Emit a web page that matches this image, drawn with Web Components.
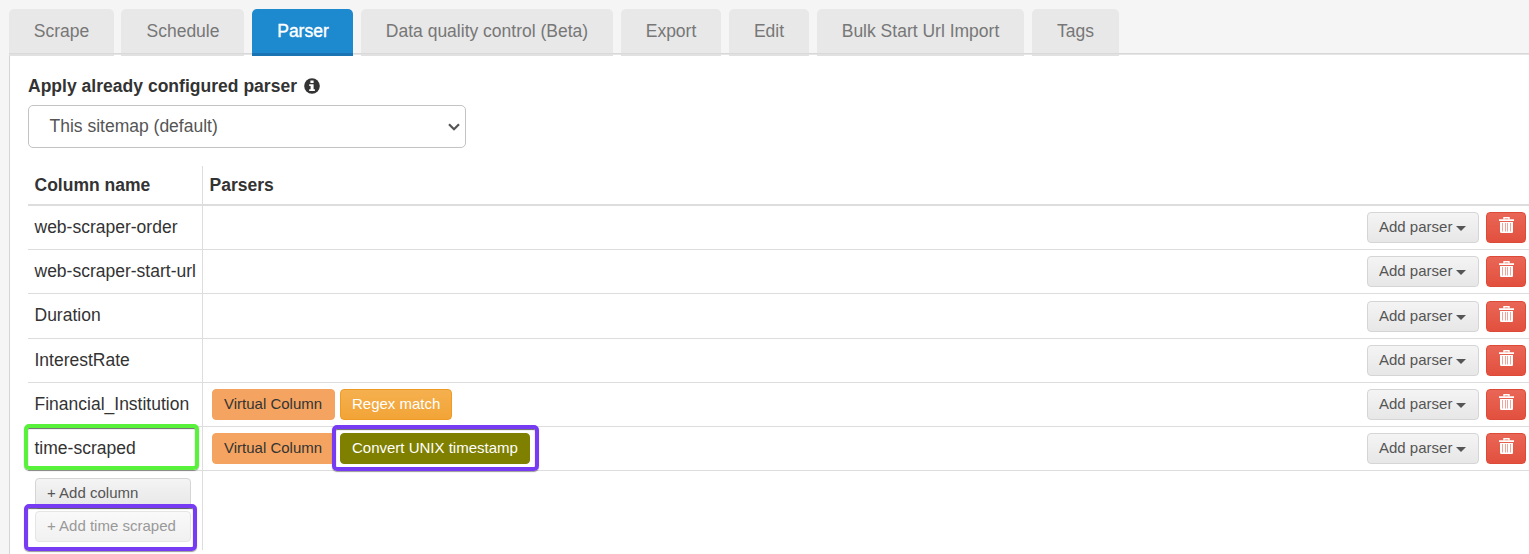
<!DOCTYPE html>
<html lang="en">
<head>
<meta charset="utf-8">
<title>Parser</title>
<style>
html,body{margin:0;height:100%;overflow:hidden;background:#f5f5f5}
body{font:17.5px/24px "Liberation Sans",Arial,sans-serif;color:#333}
</style>
</head>
<body>
<parser-page></parser-page>
<script>
function define(name, html) {
  const t = document.createElement('template');
  t.innerHTML = html;
  customElements.define(name, class extends HTMLElement {
    constructor() {
      super();
      this.attachShadow({ mode: 'open' }).appendChild(t.content.cloneNode(true));
    }
  });
}

define('nav-tab', `<style>
:host{display:block;box-sizing:border-box;width:var(--w);height:47px;padding:10px 0 0 var(--l,0);border-radius:5px 5px 0 0;
background:linear-gradient(#e8e8e8 44px,#d9d9d9 44px 45px,#e1e1e1 45px);color:#777;text-align:center;line-height:24px;white-space:nowrap}
:host([active]){background:linear-gradient(#1d89cf 44px,#1a74b3 44px);color:#fff;-webkit-text-stroke:.4px #fff}
</style><slot></slot>`);

define('tab-bar', `<style>
:host{display:flex;height:55px;box-sizing:border-box;padding:9px 0 0 9px;
background:linear-gradient(#d8d8d8,#d8d8d8) 9px 53px/100% 1px no-repeat,linear-gradient(#e5e5e5,#e5e5e5) 9px 54px/100% 1px no-repeat,#f5f5f5}
</style><slot></slot>`);

define('info-icon', `<style>:host{display:block;width:16px;height:16px}svg{display:block}</style>
<svg width="16" height="16" viewBox="0 0 16 16"><circle cx="8" cy="8" r="7.8" fill="#333"/>
<path fill="#fff" d="M6.4 2.4h3.2v2.5H6.4zM5.2 6.2h4.4v5h1.3V13H5.2v-1.8h1.4V8H5.2z"/></svg>`);

define('select-box', `<style>
:host{display:flex;align-items:center;justify-content:space-between;box-sizing:border-box;width:438px;height:43px;border:1px solid #c3c3c3;border-radius:5px;background:#fff;padding:0 5px 1px 20.5px;color:#555}
svg{display:block;margin-top:2px}
</style><span><slot></slot></span><svg width="12" height="8" viewBox="0 0 12 8"><path d="M1 1.2 6 6.2l5-5" fill="none" stroke="#555" stroke-width="2.2"/></svg>`);

define('ui-button', `<style>
:host{display:flex;align-items:center;box-sizing:border-box;width:var(--w);height:31px;padding:0 0 1px 11px;border:1px solid #d5d5d5;border-radius:4px;
background:linear-gradient(#f4f4f4,#e7e7e7);color:#555;font-size:15px;line-height:20px;white-space:nowrap}
:host([kind=virtual]){background:#f4a460;border-color:#f4a460;color:#333}
:host([kind=regex]){background:linear-gradient(#f5b04f,#f2a436);border-color:#ee9a24;color:#fff}
:host([kind=unix]){background:olive;border-color:olive;color:#fff}
:host([kind=danger]){background:linear-gradient(#e96656,#e2503e);border-color:#de4a38;padding:0;justify-content:center}
:host([disabled]){background:linear-gradient(#f9f9f9,#f1f1f1);border-color:#e5e5e5;color:#999}
</style><slot></slot>`);

define('caret-down', `<style>:host{display:block;margin:2px 0 0 4px;border:5px solid transparent;border-top-color:#555;border-bottom:0}</style>`);

define('trash-icon', `<style>:host{display:block;width:15px;height:16px;margin-top:-5px}svg{display:block}</style>
<svg width="15" height="16" viewBox="0 0 15 16">
<path d="M5 2.5V.8h5v1.7" fill="none" stroke="#fff" stroke-width="1.4"/>
<path fill="#fff" d="M0 2.3h15v1.8H0zM1 5h13v9.8q0 1.2-1.2 1.2H2.2Q1 16 1 14.8z"/>
<path d="M3.5 6v8.5M6.5 6v8.5M8.5 6v8.5M11.5 6v8.5" stroke="#f0a59b" stroke-width="1"/></svg>`);

define('row-actions', `<style>:host{display:flex;gap:7px}</style>
<ui-button style="--w:112px">Add parser<caret-down></caret-down></ui-button>
<ui-button kind="danger" style="--w:40px"><trash-icon></trash-icon></ui-button>`);

define('column-row', `<style>
:host{display:grid;grid-template-columns:174px 1fr auto;box-sizing:border-box;height:var(--h,44px);border-bottom:1px solid #ddd}
.name{box-sizing:border-box;padding:9px 0 0 6.5px;white-space:nowrap}
.parsers{display:flex;gap:5px;border-left:1px solid #ddd;padding:var(--t,6px) 0 0 9px}
row-actions{padding:var(--t,6px) 3px 0 0}
</style><div class="name"><slot name="name"></slot></div><div class="parsers"><slot></slot></div><row-actions></row-actions>`);

define('table-head', `<style>
:host{display:grid;grid-template-columns:174px 1fr;box-sizing:border-box;height:40px;border-bottom:2px solid #ddd;font-weight:700}
div{padding:7px 0 0 6.5px}.p{border-left:1px solid #ddd}
</style><div><slot name="name"></slot></div><div class="p"><slot></slot></div>`);

define('table-foot', `<style>
:host{display:grid;grid-template-columns:174px 1fr;height:79px}
.adds{display:grid;align-content:start;gap:2px;padding:7px 0 0 7px}.p{border-left:1px solid #ddd}
</style><div class="adds"><slot></slot></div><div class="p"></div>`);

define('mark-box', `<style>
:host{position:absolute;box-sizing:border-box;border:4px solid var(--c);border-radius:5px;box-shadow:inset 0 1px 1px #0009,0 1px 1px #0006}
</style>`);

define('parser-page', `<style>
:host{display:block;height:554px;position:relative;overflow:hidden}
tab-bar{position:relative;z-index:1}
.g{width:8px;flex:none}
.panel{box-sizing:border-box;height:499px;margin-left:9px;border-left:1px solid #d5d5d5;background:#fff;padding:19px 0 0 18px}
.label{display:flex;align-items:center;gap:6.5px;height:24px;font-weight:700;margin-bottom:7px}
.table{margin-top:18px}
</style>
<tab-bar>
<nav-tab style="--w:105px">Scrape</nav-tab><div class="g" style="width:7px"></div>
<nav-tab style="--w:123px;--l:1px">Schedule</nav-tab><div class="g"></div>
<nav-tab active style="--w:101px;--l:1px">Parser</nav-tab><div class="g"></div>
<nav-tab style="--w:252px">Data quality control (Beta)</nav-tab><div class="g"></div>
<nav-tab style="--w:100px">Export</nav-tab><div class="g"></div>
<nav-tab style="--w:80px">Edit</nav-tab><div class="g"></div>
<nav-tab style="--w:207px">Bulk Start Url Import</nav-tab><div class="g"></div>
<nav-tab style="--w:87px">Tags</nav-tab>
</tab-bar>
<div class="panel">
<div class="label"><span style="letter-spacing:.02px">Apply already configured parser</span><info-icon></info-icon></div>
<select-box>This sitemap (default)</select-box>
<div class="table">
<table-head><span slot="name">Column name</span>Parsers</table-head>
<column-row><span slot="name">web-scraper-order</span></column-row>
<column-row><span slot="name">web-scraper-start-url</span></column-row>
<column-row style="--h:45px;--t:7px"><span slot="name">Duration</span></column-row>
<column-row><span slot="name">InterestRate</span></column-row>
<column-row><span slot="name">Financial_Institution</span><ui-button kind="virtual" style="--w:123px">Virtual Column</ui-button><ui-button kind="regex" style="--w:112px">Regex match</ui-button></column-row>
<column-row><span slot="name">time-scraped</span><ui-button kind="virtual" style="--w:123px">Virtual Column</ui-button><ui-button kind="unix" style="--w:190px">Convert UNIX timestamp</ui-button></column-row>
<table-foot><ui-button style="--w:156px">+ Add column</ui-button><ui-button disabled style="--w:156px">+ Add time scraped</ui-button></table-foot>
</div>
</div>
<mark-box style="--c:#58f23a;left:24px;top:424px;width:175px;height:46px"></mark-box>
<mark-box style="--c:#763bf2;left:24px;top:504px;width:173px;height:47px"></mark-box>
<mark-box style="--c:#763bf2;left:332px;top:425px;width:207px;height:46px"></mark-box>
`);
</script>
</body>
</html>
